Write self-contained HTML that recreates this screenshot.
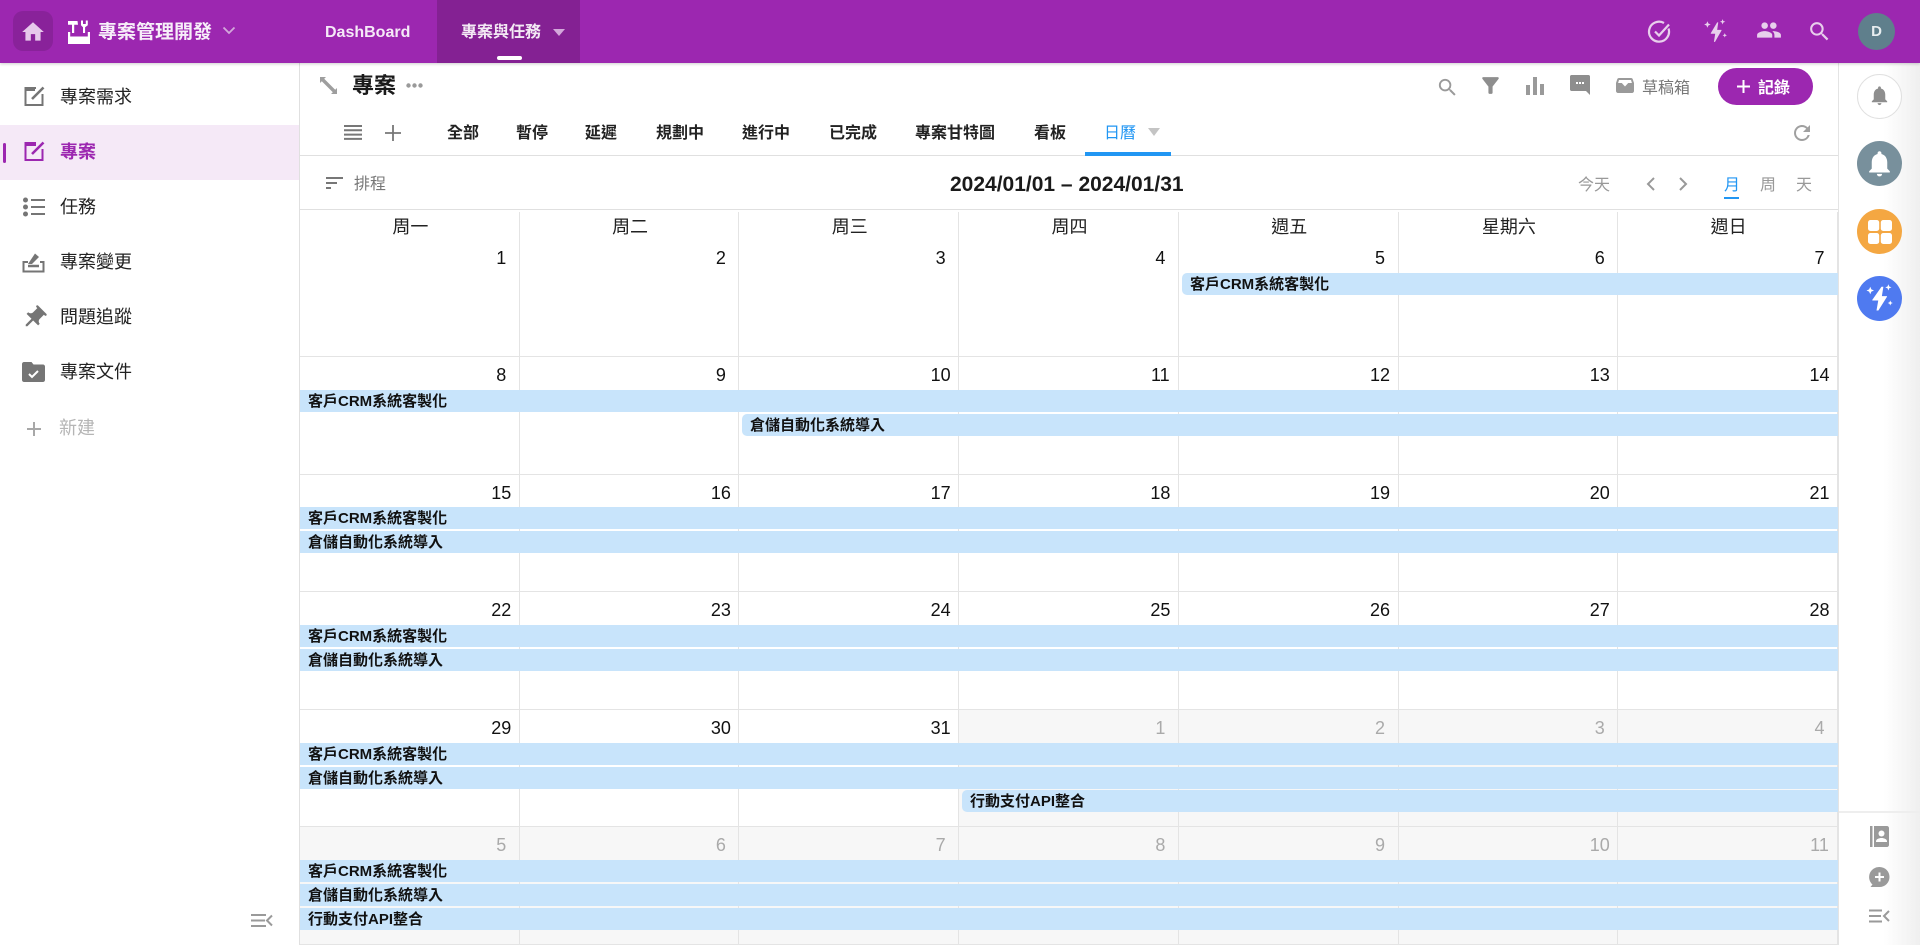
<!DOCTYPE html>
<html lang="zh-Hant">
<head>
<meta charset="utf-8">
<title>專案</title>
<style>
html,body{margin:0;padding:0;width:1920px;height:945px;overflow:hidden;background:#fff}
body{font-family:"Liberation Sans","WenQuanYi Zen Hei","Noto Sans CJK TC",sans-serif;color:#111;position:relative}
.a{position:absolute;white-space:nowrap}
svg{position:absolute;display:block;overflow:visible}
#top{position:absolute;left:0;top:0;width:1920px;height:63px;background:#9c27b0;box-shadow:0 1px 3px rgba(0,0,0,.2);z-index:5}
.nav{font-size:16px;font-weight:700;color:rgba(255,255,255,.9);line-height:20px}
.side{font-size:18px;line-height:24px;color:#222;left:60px}
.tab{font-size:16px;font-weight:700;line-height:20px;top:124px;color:#222}
.wk{position:absolute;left:300px;top:210px;width:1538px;height:30px;display:grid;grid-template-columns:repeat(7,1fr)}
.wk div{text-align:center;font-size:18px;color:#222;border-right:1px solid #e4e4e4;height:28px;margin-top:2px;line-height:31px;padding-left:2px}
.cal{position:absolute;left:300px;top:239.5px;width:1538px;display:grid;grid-template-columns:repeat(7,1fr);grid-auto-rows:117.5px}
.cal div{box-sizing:border-box;border-right:1px solid #e4e4e4;border-bottom:1px solid #e4e4e4;text-align:center;padding:8px 0 0 calc(100% - 36px);font-size:18px;line-height:20px;color:#111}
.cal div.g{background:#f7f7f7;color:#aaa}
.e{position:absolute;height:22px;background:#c8e4fb;font-size:15px;font-weight:700;line-height:24px;color:#111;white-space:nowrap;padding-left:8px;box-sizing:border-box;left:300px;width:1538px;overflow:hidden}
.e.s{border-radius:5px 0 0 5px}
</style>
</head>
<body>
<div id="top">
  <div class="a" style="left:13px;top:11px;width:40px;height:40px;background:rgba(0,0,0,.12);border-radius:10px"></div>
  <svg style="left:20px;top:19px" width="26" height="26" viewBox="0 0 24 24" fill="#e6c8eb"><path d="M10 20v-6h4v6h5v-8h3L12 3 2 12h3v8z"/></svg>
  <svg style="left:67px;top:20px" width="24" height="24" viewBox="0 0 24 24" fill="#fff"><path d="M1 12h2.200v4.500h17.600V12H23v12H1zM3.200 19h17.600v2.400H3.200z"/><path d="M1 1h9.500l.5 3.800H7.200V13H5V4.800H1z"/><path d="M14 .5h2v3.500h2.800V.5h2v4.800l-2.700 2V13H16V7.300l-2-2z"/></svg>
  <div class="a" style="left:98px;top:20px;font-size:19px;font-weight:700;line-height:26px;color:#f7eef9">專案管理開發</div>
  <svg style="left:222px;top:26px" width="14" height="9" viewBox="0 0 14 9" fill="none" stroke="#d3a8db" stroke-width="1.800"><path d="M1.500 1.500 7 7l5.500-5.500"/></svg>
  <div class="a nav" style="left:325px;top:23px">DashBoard</div>
  <div class="a" style="left:437px;top:0;width:143px;height:63px;background:#842193"></div>
  <div class="a nav" style="left:461px;top:23px">專案與任務</div>
  <svg style="left:553px;top:29px" width="12" height="7" viewBox="0 0 12 7" fill="#d3a8db"><path d="M0 0h12L6 7z"/></svg>
  <div class="a" style="left:497px;top:56px;width:25px;height:4px;background:#fff;border-radius:2px"></div>
  <svg style="left:1648px;top:20px" width="24" height="24" viewBox="0 0 24 24" fill="none" stroke="#e8cfec" stroke-width="2.200"><path d="M20.500 8.500A10 10 0 1 1 16 3"/><path d="M7 11.500l4 4L21 4.500"/></svg>
  <svg style="left:1702px;top:18px" width="26" height="26" viewBox="0 0 24 24" fill="#e8cfec"><path d="M12 22h-1l1.200-7.500H8.500c-.5 0-.5-.3-.3-.6L14 4h1l-1 7h3.600c.5 0 .5.3.4.5z"/><path d="M5 3l.9 2.100L8 6l-2.100.9L5 9l-.9-2.100L2 6l2.100-.9zM19 1l.7 1.800 1.800.7-1.800.7L19 6l-.7-1.800-1.800-.7 1.800-.7zM21 14l.6 1.400 1.400.6-1.400.6L21 18l-.6-1.400-1.400-.6 1.400-.6z"/></svg>
  <svg style="left:1756px;top:17px" width="26" height="26" viewBox="0 0 24 24" fill="#e8cfec"><path d="M16 11c1.660 0 2.990-1.340 2.990-3S17.660 5 16 5c-1.660 0-3 1.340-3 3s1.340 3 3 3zm-8 0c1.660 0 2.990-1.340 2.990-3S9.660 5 8 5C6.340 5 5 6.340 5 8s1.340 3 3 3zm0 2c-2.330 0-7 1.170-7 3.500V19h14v-2.500c0-2.330-4.670-3.500-7-3.500zm8 0c-.29 0-.62.02-.97.05 1.160.84 1.970 1.970 1.970 3.450V19h6v-2.500c0-2.330-4.670-3.500-7-3.500z"/></svg>
  <svg style="left:1807px;top:19px" width="25" height="25" viewBox="0 0 24 24" fill="#e8cfec"><path d="M15.500 14h-.79l-.28-.27A6.471 6.471 0 0 0 16 9.500 6.500 6.500 0 1 0 9.500 16c1.610 0 3.090-.59 4.230-1.570l.27.28v.79l5 4.990L20.490 19l-4.990-5zm-6 0C7.010 14 5 11.990 5 9.500S7.010 5 9.500 5 14 7.010 14 9.500 11.990 14 9.500 14z"/></svg>
  <div class="a" style="left:1858px;top:13px;width:37px;height:37px;border-radius:50%;background:#5f7f8c;color:#e8eef0;font-size:15px;font-weight:700;text-align:center;line-height:38px">D</div>
</div>

<!-- left sidebar -->
<div class="a" style="left:299px;top:63px;width:1px;height:882px;background:#e0e0e0"></div>
<div class="a" style="left:0;top:125px;width:299px;height:55px;background:#f5e9f7"></div>
<div class="a" style="left:3px;top:143px;width:3px;height:20px;background:#9c27b0;border-radius:2px"></div>

<svg style="left:24px;top:85px" width="22" height="22" viewBox="0 0 22 22" fill="none" stroke="#757575" stroke-width="2"><path d="M12 3H1.500v17h17V9"/><path d="M8 14 19.500 2.500" stroke-width="2.600"/><path d="M2 3h9v3H2z" fill="#757575" stroke="none"/></svg>
<div class="a side" style="top:85px">專案需求</div>
<svg style="left:24px;top:140px" width="22" height="22" viewBox="0 0 22 22" fill="none" stroke="#9c27b0" stroke-width="2"><path d="M12 3H1.500v17h17V9"/><path d="M8 14 19.500 2.500" stroke-width="2.600"/><path d="M2 3h10v3H2z" fill="#9c27b0" stroke="none"/></svg>
<div class="a side" style="top:140px;color:#9c27b0;font-weight:700">專案</div>
<svg style="left:23px;top:197px" width="22" height="20" viewBox="0 0 22 20" fill="#757575"><circle cx="2.500" cy="3" r="2.500"/><circle cx="2.500" cy="10" r="2.500"/><circle cx="2.500" cy="17" r="2.500"/><path d="M8 2h14v2H8zM8 9h14v2H8zM8 16h14v2H8z"/></svg>
<div class="a side" style="top:195px">任務</div>
<svg style="left:22px;top:252px" width="23" height="21" viewBox="0 0 23 21" fill="none" stroke="#757575" stroke-width="2"><path d="M6 10H1.500v9.500h20V10H18"/><path d="M6 14h11" stroke-width="2.500"/><path d="M6 12 13 1.500l4 3.500-7 7z" fill="#757575" stroke="none"/></svg>
<div class="a side" style="top:250px">專案變更</div>
<svg style="left:20px;top:304px" width="28" height="28" viewBox="0 0 24 24" fill="#757575"><path transform="rotate(45 12 12)" d="M16 9V4h1c.55 0 1-.45 1-1s-.45-1-1-1H7c-.55 0-1 .45-1 1s.45 1 1 1h1v5c0 1.660-1.340 3-3 3v2h5.970v7l1 1 1-1v-7H19v-2c-1.660 0-3-1.340-3-3z"/></svg>
<div class="a side" style="top:305px">問題追蹤</div>
<svg style="left:22px;top:361px" width="23" height="22" viewBox="0 0 23 22" fill="#757575"><path d="M21 3.500H11.500l-2-2.500H2C.9 1 0 1.900 0 3v16c0 1.100.9 2 2 2h19c1.100 0 2-.9 2-2V5.500c0-1.100-.9-2-2-2z"/><path d="M7 13l3 3 6-6" fill="none" stroke="#fff" stroke-width="2"/></svg>
<div class="a side" style="top:360px">專案文件</div>
<svg style="left:26px;top:421px" width="16" height="16" viewBox="0 0 16 16" fill="none" stroke="#a8a8a8" stroke-width="2"><path d="M8 1v14M1 8h14"/></svg>
<div class="a side" style="top:416px;left:59px;color:#b5b5b5">新建</div>
<svg style="left:251px;top:913px" width="22" height="15" viewBox="0 0 22 15" fill="none" stroke="#9a9a9a" stroke-width="2"><path d="M0 2h15M0 7.500h14M0 13h15M21 2.500l-5 5 5 5"/></svg>

<!-- toolbar -->
<svg style="left:320px;top:77px" width="17" height="17" viewBox="0 0 17 17" fill="#9e9e9e"><path d="M0 0h6L4.200 1.800 15.200 12.800 17 11v6h-6l1.800-1.800L1.800 4.200 0 6z"/></svg>
<div class="a" style="left:352px;top:72px;font-size:22px;font-weight:700;line-height:28px;color:#1a1a1a">專案</div>
<svg style="left:406px;top:83px" width="18" height="5" viewBox="0 0 18 5" fill="#9a9a9a"><circle cx="2.500" cy="2.500" r="2.200"/><circle cx="8.500" cy="2.500" r="2.200"/><circle cx="14.500" cy="2.500" r="2.200"/></svg>

<svg style="left:344px;top:125px" width="18" height="15" viewBox="0 0 18 15" fill="#777"><path d="M0 0h18v2H0zM0 4.300h18v2H0zM0 8.600h18v2H0zM0 12.900h18v2H0z"/></svg>
<svg style="left:385px;top:125px" width="16" height="16" viewBox="0 0 16 16" fill="none" stroke="#777" stroke-width="1.800"><path d="M8 0v16M0 8h16"/></svg>
<div class="a tab" style="left:447px">全部</div>
<div class="a tab" style="left:516px">暫停</div>
<div class="a tab" style="left:585px">延遲</div>
<div class="a tab" style="left:656px">規劃中</div>
<div class="a tab" style="left:742px">進行中</div>
<div class="a tab" style="left:829px">已完成</div>
<div class="a tab" style="left:915px">專案甘特圖</div>
<div class="a tab" style="left:1034px">看板</div>
<div class="a tab" style="left:1104px;color:#2196f3;font-weight:400">日曆</div>
<svg style="left:1148px;top:128px" width="12" height="8" viewBox="0 0 12 8" fill="#c4c4c4"><path d="M0 0h12L6 8z"/></svg>
<div class="a" style="left:300px;top:155px;width:1538px;height:1px;background:#e0e0e0"></div>
<div class="a" style="left:1085px;top:152px;width:86px;height:4px;background:#2196f3"></div>

<svg style="left:1436px;top:76px" width="23" height="23" viewBox="0 0 24 24" fill="#9a9a9a"><path d="M15.500 14h-.79l-.28-.27A6.471 6.471 0 0 0 16 9.500 6.500 6.500 0 1 0 9.500 16c1.610 0 3.090-.59 4.230-1.570l.27.28v.79l5 4.990L20.490 19l-4.990-5zm-6 0C7.010 14 5 11.990 5 9.500S7.010 5 9.500 5 14 7.010 14 9.500 11.990 14 9.500 14z"/></svg>
<svg style="left:1478px;top:73px" width="25" height="25" viewBox="0 0 24 24" fill="#8e8e8e"><path d="M4.250 5.610C6.270 8.200 10 13 10 13v6c0 .55.45 1 1 1h2c.55 0 1-.45 1-1v-6s3.720-4.800 5.740-7.390A.998.998 0 0 0 18.950 4H5.040c-.83 0-1.300.95-.79 1.610z"/></svg>
<svg style="left:1526px;top:77px" width="18" height="18" viewBox="0 0 18 18" fill="#9a9a9a"><path d="M0 8h4v10H0zM7 0h4v18H7zM14 7h4v11h-4z"/></svg>
<svg style="left:1570px;top:75px" width="20" height="20" viewBox="0 0 20 20" fill="#8e8e8e"><path d="M1.500 0h17c.8 0 1.500.7 1.500 1.500V20l-4-4H1.500C.7 16 0 15.300 0 14.500v-13C0 .7.700 0 1.500 0z"/><path d="M6 7h2v2H6zM9 7h2v2H9zM12 7h2v2h-2z" fill="#fff"/></svg>
<svg style="left:1616px;top:78px" width="18" height="15" viewBox="0 0 18 15" fill="#9a9a9a"><path d="M3 0h12c.8 0 1.400.4 1.700 1.100L18 5v8c0 1.100-.9 2-2 2H2c-1.100 0-2-.9-2-2V5l1.300-3.900C1.600.4 2.200 0 3 0z"/><path d="M3 2h12l.9 3h-3.700L9 8.500 5.800 5H2.100z" fill="#fff"/></svg>
<div class="a" style="left:1642px;top:79px;font-size:16px;line-height:20px;color:#777">草稿箱</div>
<div class="a" style="left:1718px;top:68px;width:95px;height:37px;background:#9c27b0;border-radius:19px"></div>
<svg style="left:1737px;top:80px" width="13" height="13" viewBox="0 0 13 13" fill="none" stroke="#fff" stroke-width="2"><path d="M6.500 0v13M0 6.500h13"/></svg>
<div class="a" style="left:1758px;top:79px;font-size:16px;font-weight:700;line-height:20px;color:#fff">記錄</div>
<svg style="left:1790px;top:121px" width="24" height="24" viewBox="0 0 24 24" fill="#a0a0a0"><path d="M17.650 6.350A7.958 7.958 0 0 0 12 4c-4.420 0-7.990 3.580-7.990 8s3.570 8 7.990 8c3.730 0 6.840-2.550 7.730-6h-2.080A5.990 5.990 0 0 1 12 18c-3.310 0-6-2.690-6-6s2.690-6 6-6c1.660 0 3.140.69 4.220 1.780L13 11h7V4l-2.350 2.350z"/></svg>

<!-- calendar toolbar -->
<svg style="left:326px;top:177px" width="17" height="13" viewBox="0 0 17 13" fill="#777"><path d="M0 0h17v2H0zM0 5h11v2H0zM0 10h5v2H0z"/></svg>
<div class="a" style="left:354px;top:175px;font-size:16px;line-height:20px;color:#777">排程</div>
<div class="a" style="left:950px;top:172px;font-size:21px;font-weight:700;line-height:26px;color:#1a1a1a">2024/01/01 – 2024/01/31</div>
<div class="a" style="left:1578px;top:176px;font-size:16px;line-height:20px;color:#999">今天</div>
<svg style="left:1646px;top:177px" width="9" height="14" viewBox="0 0 9 14" fill="none" stroke="#999" stroke-width="2"><path d="M8 1 2 7l6 6"/></svg>
<svg style="left:1679px;top:177px" width="9" height="14" viewBox="0 0 9 14" fill="none" stroke="#999" stroke-width="2"><path d="M1 1l6 6-6 6"/></svg>
<div class="a" style="left:1724px;top:176px;font-size:16px;line-height:20px;color:#2196f3">月</div>
<div class="a" style="left:1724px;top:197px;width:15px;height:2px;background:#2196f3"></div>
<div class="a" style="left:1760px;top:176px;font-size:16px;line-height:20px;color:#999">周</div>
<div class="a" style="left:1796px;top:176px;font-size:16px;line-height:20px;color:#999">天</div>
<div class="a" style="left:300px;top:209px;width:1538px;height:1px;background:#e0e0e0"></div>

<!-- calendar -->
<div class="wk"><div>周一</div><div>周二</div><div>周三</div><div>周四</div><div>週五</div><div>星期六</div><div>週日</div></div>
<div class="cal">
<div>1</div><div>2</div><div>3</div><div>4</div><div>5</div><div>6</div><div>7</div>
<div>8</div><div>9</div><div>10</div><div>11</div><div>12</div><div>13</div><div>14</div>
<div>15</div><div>16</div><div>17</div><div>18</div><div>19</div><div>20</div><div>21</div>
<div>22</div><div>23</div><div>24</div><div>25</div><div>26</div><div>27</div><div>28</div>
<div>29</div><div>30</div><div>31</div><div class="g">1</div><div class="g">2</div><div class="g">3</div><div class="g">4</div>
<div class="g">5</div><div class="g">6</div><div class="g">7</div><div class="g">8</div><div class="g">9</div><div class="g">10</div><div class="g">11</div>
</div>

<div class="e s" style="top:273px;left:1182px;width:656px">客戶CRM系統客製化</div>
<div class="e" style="top:390px">客戶CRM系統客製化</div>
<div class="e s" style="top:414px;left:742px;width:1096px">倉儲自動化系統導入</div>
<div class="e" style="top:507px">客戶CRM系統客製化</div>
<div class="e" style="top:531px">倉儲自動化系統導入</div>
<div class="e" style="top:625px">客戶CRM系統客製化</div>
<div class="e" style="top:649px">倉儲自動化系統導入</div>
<div class="e" style="top:743px">客戶CRM系統客製化</div>
<div class="e" style="top:767px">倉儲自動化系統導入</div>
<div class="e s" style="top:790px;left:962px;width:876px">行動支付API整合</div>
<div class="e" style="top:860px">客戶CRM系統客製化</div>
<div class="e" style="top:884px">倉儲自動化系統導入</div>
<div class="e" style="top:908px">行動支付API整合</div>

<!-- right sidebar -->
<div class="a" style="left:1838px;top:63px;width:82px;height:882px;background:linear-gradient(90deg,#fff 0,#fff 55%,#efefef 100%);border-left:1px solid #e4e4e4;box-sizing:border-box"></div>
<div class="a" style="left:1857px;top:74px;width:45px;height:45px;border-radius:50%;background:#fff;border:1px solid #e0e0e0;box-sizing:border-box"></div>
<svg style="left:1868px;top:84px" width="23" height="23" viewBox="0 0 24 24" fill="#8e8e8e"><path d="M12 22c1.100 0 2-.9 2-2h-4c0 1.100.89 2 2 2zm6-6v-5c0-3.070-1.640-5.640-4.500-6.320V4c0-.83-.67-1.500-1.500-1.500s-1.500.67-1.500 1.500v.68C7.630 5.360 6 7.920 6 11v5l-2 2v1h16v-1l-2-2z"/></svg>
<div class="a" style="left:1857px;top:141px;width:45px;height:45px;border-radius:50%;background:#78909c"></div>
<svg style="left:1864px;top:148px" width="31" height="31" viewBox="0 0 24 24" fill="#fff"><path d="M12 22c1.100 0 2-.9 2-2h-4c0 1.100.89 2 2 2zm6-6v-5c0-3.070-1.640-5.640-4.500-6.320V4c0-.83-.67-1.500-1.500-1.500s-1.500.67-1.500 1.500v.68C7.630 5.360 6 7.920 6 11v5l-2 2v1h16v-1l-2-2z"/></svg>
<div class="a" style="left:1857px;top:209px;width:45px;height:45px;border-radius:50%;background:#f4a742"></div>
<svg style="left:1868px;top:220px" width="24" height="24" viewBox="0 0 24 24" fill="#fff"><rect x="0" y="0" width="11.200" height="11" rx="2.500"/><rect x="12.800" y="0" width="11.200" height="11" rx="2.500"/><rect x="0" y="13" width="11.200" height="11" rx="2.500"/><rect x="12.800" y="13" width="11.200" height="11" rx="2.500"/></svg>
<div class="a" style="left:1857px;top:276px;width:45px;height:45px;border-radius:50%;background:#4f7af0"></div>
<svg style="left:1864px;top:283px" width="30" height="30" viewBox="0 0 24 24" fill="#fff"><path d="M11.500 22h-1.500l1.400-8H7c-.5 0-.5-.3-.3-.6L14 3h1.500l-1.200 7.500H18c.5 0 .5.3.4.5z"/><path d="M5 3l.9 2.100L8 6l-2.100.9L5 9l-.9-2.100L2 6l2.100-.9zM19.500 1l.7 1.800 1.800.7-1.800.7-.7 1.800-.7-1.800-1.800-.7 1.800-.7zM21 14l.6 1.400 1.400.6-1.400.6L21 18l-.6-1.400-1.400-.6 1.400-.6z"/></svg>
<div class="a" style="left:1839px;top:811px;width:81px;height:2px;background:#eee"></div>
<svg style="left:1870px;top:826px" width="19" height="21" viewBox="0 0 19 21" fill="#9a9a9a"><path d="M0 0h2.500v21H0zM4 0h13c1.100 0 2 .9 2 2v17c0 1.100-.9 2-2 2H4z"/><circle cx="11.500" cy="7.500" r="3" fill="#fff"/><path d="M6 15.500c0-2.500 3-3.500 5.500-3.500s5.500 1 5.500 3.500V16H6z" fill="#fff"/></svg>
<svg style="left:1869px;top:867px" width="21" height="21" viewBox="0 0 21 21" fill="#9a9a9a"><path d="M10.500 0a10 10 0 0 1 0 20H1.500l2-2.500A10 10 0 0 1 10.500 0z"/><path d="M10.500 5.500v9M6 10h9" fill="none" stroke="#fff" stroke-width="2"/></svg>
<svg style="left:1869px;top:909px" width="21" height="14" viewBox="0 0 21 14" fill="none" stroke="#9a9a9a" stroke-width="2"><path d="M0 1.500h13M0 7h12M0 12.500h13M20 2l-5 5 5 5"/></svg>
</body>
</html>
